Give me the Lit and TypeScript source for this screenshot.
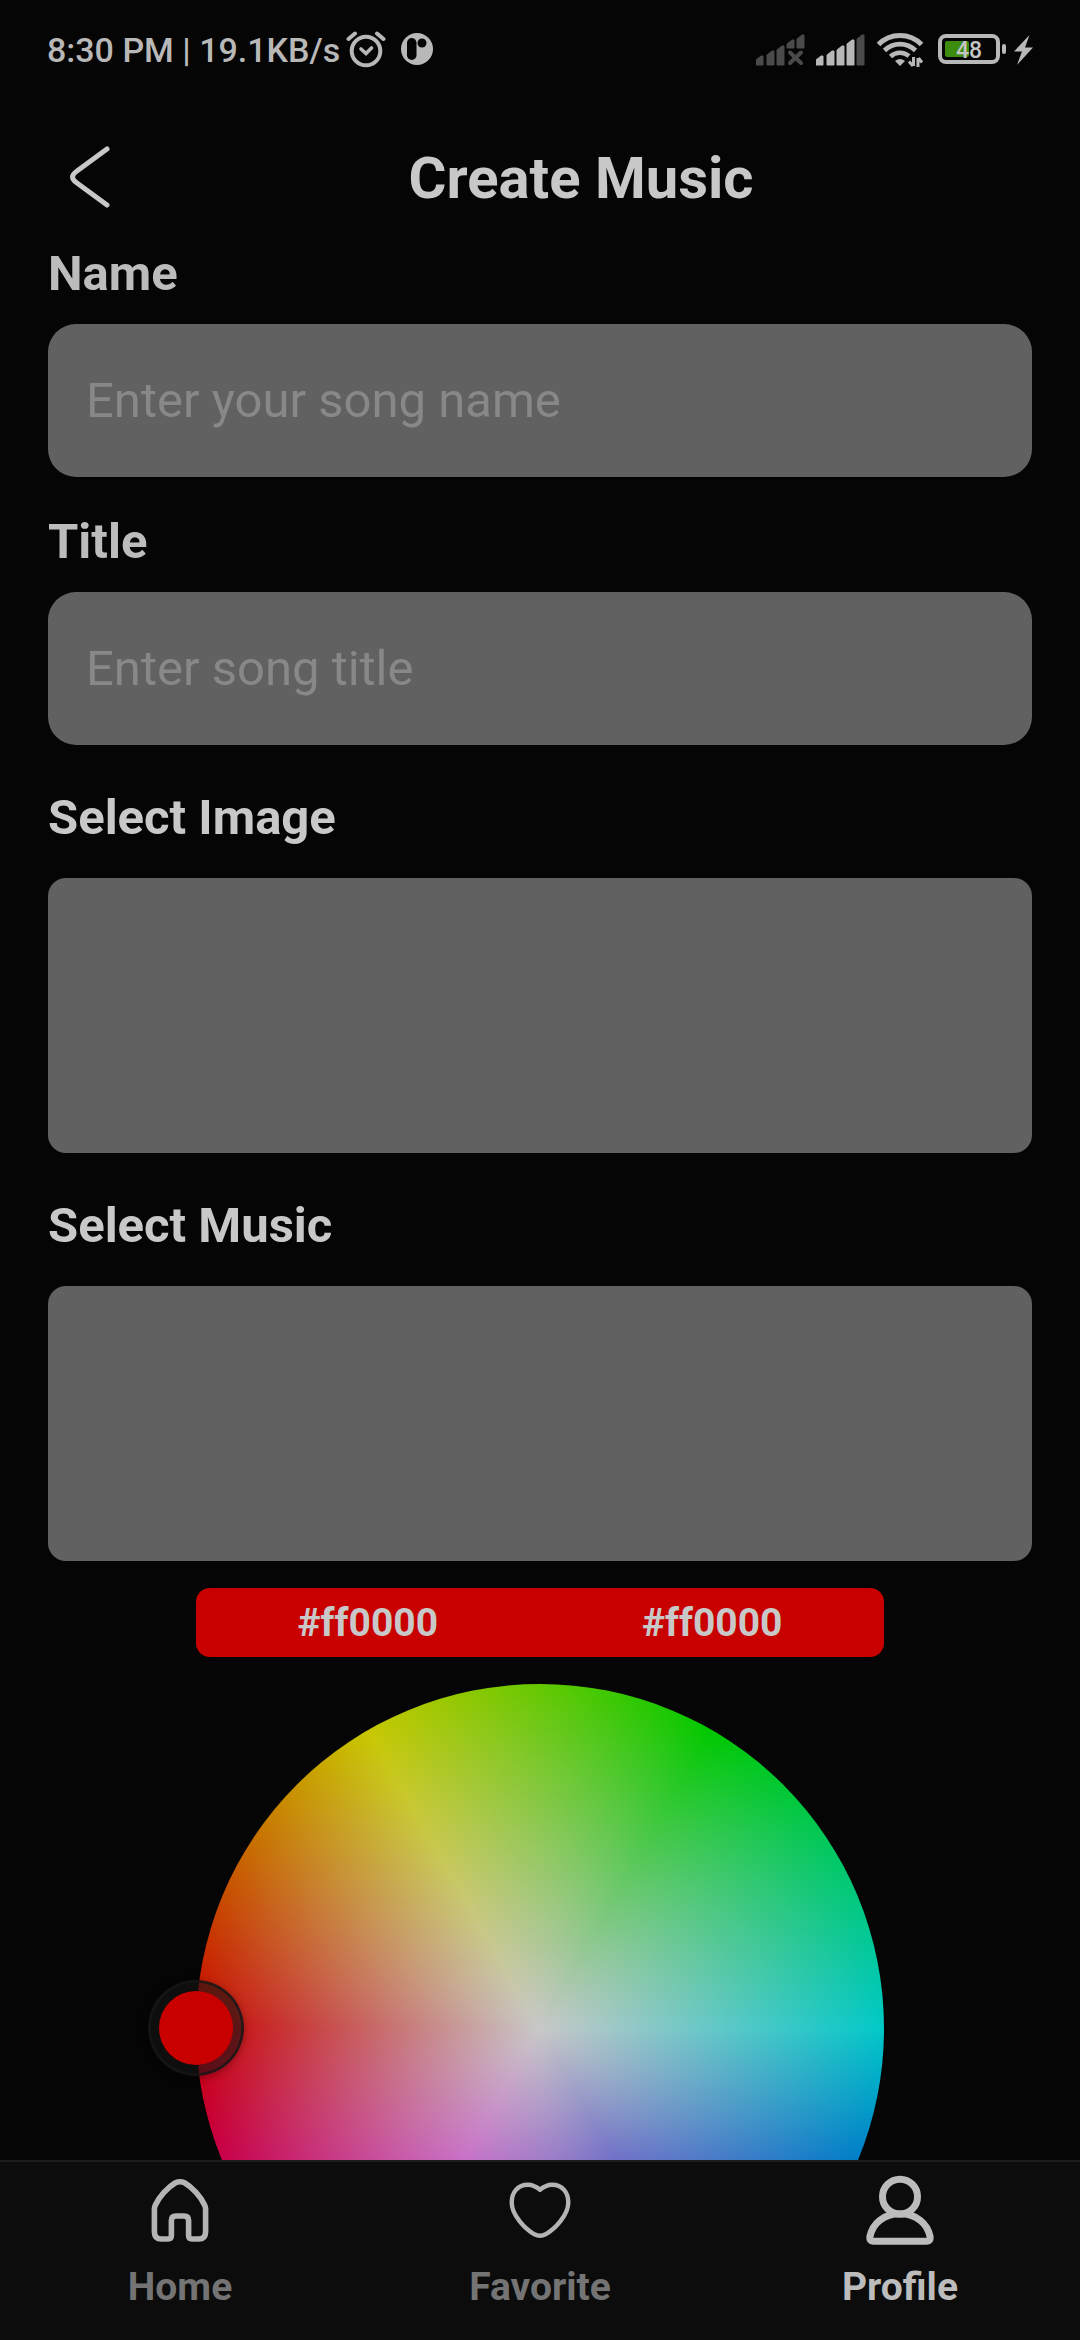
import { LitElement, html, css, svg } from "lit";
import { customElement, property, state } from "lit/decorators.js";
import { classMap } from "lit/directives/class-map.js";

const cellBars = (lit: number, cut: boolean) => {
  const bars = [
    { x: 0, y: 22 },
    { x: 11, y: 17 },
    { x: 21, y: 12 },
    { x: 31, y: 6 },
    { x: 41, y: 1 },
  ];
  return bars.map((b, i) => {
    const end = cut && i > 2 ? 14 : 31;
    return svg`<path class=${i < lit ? "on" : "off"}
      d="M${b.x} ${b.y + 4} L${b.x + 5} ${b.y} H${b.x + 7} V${end} H${b.x} Z" />`;
  });
};

@customElement("status-bar")
export class StatusBar extends LitElement {
  @property({ type: Number }) battery = 48;

  static styles = css`
    :host {
      display: flex;
      justify-content: space-between;
      align-items: center;
      height: 100px;
      padding: 0 47px;
      color: #b8b8b8;
      font: 500 34px/40px Roboto, sans-serif;
    }
    .group {
      display: flex;
      align-items: center;
      gap: 8px;
    }
    .left {
      gap: 6px;
    }
    .tray {
      margin-left: 8px;
    }
    svg {
      display: block;
    }
    .on {
      fill: #b8b8b8;
      stroke: #b8b8b8;
      stroke-width: 1;
      stroke-linejoin: round;
    }
    .off {
      fill: #4a4a4a;
      stroke: #4a4a4a;
      stroke-width: 1;
      stroke-linejoin: round;
    }
    .cross {
      stroke: #4a4a4a;
      stroke-width: 4;
      stroke-linecap: round;
    }
    .level {
      font: 500 23px/23px Roboto, sans-serif;
      fill: #c4c4c4;
    }
  `;

  render() {
    return html`
      <div class="group left">
        <span>8:30 PM | 19.1KB/s</span>
        <svg width="40" height="38" viewBox="0 0 40 38" fill="none" stroke="#b8b8b8" stroke-linecap="round" aria-hidden="true">
          <circle cx="20" cy="20" r="14.3" stroke-width="4" />
          <path d="M2.5 8 L9 2.5 M37.5 8 L31 2.5" stroke-width="4" />
          <path d="M15 18 L20 22.5 L25.5 17" stroke-width="3.6" />
        </svg>
        <svg class="tray" width="34" height="34" viewBox="0 0 34 34" aria-hidden="true">
          <circle cx="17" cy="16" r="16" fill="#b8b8b8" />
          <rect x="7" y="5" width="9.5" height="22" rx="4.7" fill="#050505" />
          <circle cx="22" cy="10" r="4.5" fill="#050505" />
        </svg>
      </div>
      <div class="group">
        <svg width="52" height="32" viewBox="0 0 52 32" aria-hidden="true">
          ${cellBars(0, true)}
          <path class="cross" d="M34 18.500 L45 29 M45 18.500 L34 29" />
        </svg>
        <svg width="52" height="32" viewBox="0 0 52 32" aria-hidden="true">${cellBars(4, false)}</svg>
        <svg width="54" height="36" viewBox="-1 0 54 36" fill="none" stroke="#b8b8b8" aria-hidden="true">
          <path d="M1.5 12.5 A30 30 0 0 1 44.5 12.5" stroke-width="5" />
          <path d="M7.5 18.5 A22 22 0 0 1 38.5 18.5" stroke-width="4.6" />
          <path d="M13.5 24.5 A14 14 0 0 1 32 24" stroke-width="4.6" />
          <path d="M18 29 Q23 25 28 29 L23 34 Z" fill="#b8b8b8" stroke="none" />
          <path d="M36.5 25 V34 M32 29.5 L36 34 M41 35 V26 M45 30.5 L41.5 26" stroke-width="3" />
        </svg>
        <svg width="68" height="32" viewBox="0 0 68 32" aria-hidden="true">
          <rect x="2" y="2" width="58" height="26" rx="6" fill="none" stroke="#b8b8b8" stroke-width="4" />
          <rect x="7" y="7" width=${Math.round(this.battery / 2)} height="16" rx="2" fill="#3c8c10" />
          <rect x="64" y="10" width="4" height="10" rx="2" fill="#b8b8b8" />
          <text class="level" x="31" y="24" text-anchor="middle">${this.battery}</text>
        </svg>
        <svg width="19" height="30" viewBox="0 0 19 30" fill="#b8b8b8" aria-hidden="true">
          <path d="M15.500 0 L0 16.500 H8 L3 30 L19 12.500 H11 Z" />
        </svg>
      </div>
    `;
  }
}

@customElement("color-wheel")
export class ColorWheel extends LitElement {
  @property() color = "#ff0000";

  static styles = css`
    :host {
      display: flex;
      flex-direction: column;
      align-items: center;
      gap: 27px;
      font: 700 39px/46px Roboto, sans-serif;
      color: #c8c8c8;
    }
    .swatches {
      display: grid;
      grid-template-columns: 1fr 1fr;
      width: 70%;
      height: 69px;
      border-radius: 14px;
      background: #c80000;
      align-items: center;
      text-align: center;
    }
    .wheel {
      position: relative;
      width: 70%;
      aspect-ratio: 1;
      border-radius: 50%;
      background:
        radial-gradient(closest-side, #c8c8c8, rgba(200, 200, 200, 0)),
        conic-gradient(from 270deg, #c80000, #c8c800, #00c800, #00c8c8, #0000c8, #c800c8, #c80000);
    }
    .thumb {
      position: absolute;
      left: -48px;
      top: calc(50% - 48px);
      box-sizing: border-box;
      width: 96px;
      height: 96px;
      padding: 8px;
      border: 3px solid rgba(22, 22, 22, 0.9);
      border-radius: 50%;
      background: rgba(20, 20, 20, 0.6);
      background-clip: padding-box;
      box-shadow: 0 2px 8px rgba(0, 0, 0, 0.3);
    }
    .dot {
      display: block;
      height: 100%;
      border-radius: 50%;
      background: #c80000;
    }
  `;

  render() {
    return html`
      <div class="swatches">
        <span>${this.color}</span>
        <span>${this.color}</span>
      </div>
      <div class="wheel">
        <button class="thumb" aria-label="Picked colour ${this.color}"><span class="dot"></span></button>
      </div>
    `;
  }
}

@customElement("tab-bar")
export class TabBar extends LitElement {
  @state() private active = "Profile";

  static styles = css`
    :host {
      display: block;
      background: #0c0c0c;
      border-top: 2px solid #1c1c1c;
    }
    .tabs {
      display: grid;
      grid-template-columns: repeat(3, 1fr);
    }
    .tab {
      display: flex;
      flex-direction: column;
      align-items: center;
      gap: 14px;
      padding: 12px 0 30px;
      color: #747474;
      font: 700 39px/46px Roboto, sans-serif;
      text-decoration: none;
    }
    .tab.active {
      color: #bcbcbc;
    }
    svg {
      display: block;
      fill: none;
      stroke: #b4b4b4;
      stroke-linejoin: round;
    }
    .active svg {
      stroke: #bcbcbc;
    }
  `;

  private icons = {
    Home: svg`<path stroke-width="5.600" d="M8.400 35 Q8.400 33 9.400 31 C13 23 22 13 29.500 8.800 Q34 6.600 38.500 8.800 C46 13 55 23 58.600 31 Q59.600 33 59.600 35 V58 Q59.600 65 52.600 65 H46 Q42.600 65 42.600 61.600 V46.500 Q42.600 42 38 42 H30 Q25.400 42 25.400 46.500 V61.600 Q25.400 65 22 65 H15.400 Q8.400 65 8.400 58 Z" />`,
    Favorite: svg`<path stroke-width="4.400" d="M34 15.700 C29.500 12 26 10.700 22 10.700 C11.500 10.700 5.700 18.500 5.700 28.500 C5.700 41 19 55 28.500 60.300 Q34 63.200 39.500 60.300 C49 55 62.300 41 62.300 28.500 C62.300 18.500 56.500 10.700 46 10.700 C42 10.700 38.500 12 34 15.700 Z" />`,
    Profile: svg`<circle cx="34" cy="22.700" r="17.500" stroke-width="7" /><path stroke-width="7" d="M3.800 63 C6.500 49 18 39.800 34 39.800 C50 39.800 61.500 49 64.200 63 Q64.500 67.200 61 67.200 H7 Q3.500 67.200 3.800 63 Z" />`,
  };

  render() {
    return html`
      <nav class="tabs">
        ${Object.entries(this.icons).map(
          ([name, icon]) => html`
            <a class=${classMap({ tab: true, active: name === this.active })} href="#${name.toLowerCase()}"
              @click=${() => (this.active = name)}>
              <svg width="68" height="76" viewBox="0 0 68 76" aria-hidden="true">${icon}</svg>
              <span>${name}</span>
            </a>
          `
        )}
      </nav>
    `;
  }
}

@customElement("app-root")
export class AppRoot extends LitElement {
  static styles = css`
    :host {
      display: flex;
      flex-direction: column;
      height: 100vh;
      overflow: hidden;
      background: #050505;
      color: #c8c8c8;
      font-family: Roboto, sans-serif;
    }
    .header {
      display: grid;
      grid-template-columns: 82px 1fr;
      align-items: center;
      padding: 44px 48px 33px;
    }
    .back {
      padding: 0 0 0 20px;
      border: 0;
      background: none;
      justify-self: start;
    }
    .back svg {
      display: block;
    }
    .heading {
      margin: 0;
      text-align: center;
      font: 700 58px/68px Roboto, sans-serif;
    }
    .form {
      flex: 1;
      min-height: 0;
      overflow: hidden;
      padding: 0 48px;
    }
    .field {
      display: flex;
      flex-direction: column;
      gap: 21px;
      margin-bottom: 36px;
    }
    .label {
      font: 700 49px/58px Roboto, sans-serif;
      color: #bcbcbc;
    }
    .input {
      box-sizing: border-box;
      width: 100%;
      height: 153px;
      padding: 0 38px;
      border: 0;
      border-radius: 28px;
      background: #616161;
      color: #c8c8c8;
      font: 400 49px/58px Roboto, sans-serif;
    }
    .input::placeholder {
      color: #888888;
      opacity: 1;
    }
    .picker {
      display: flex;
      flex-direction: column;
      gap: 31px;
      margin-top: 44px;
    }
    .picker .label {
      color: #c8c8c8;
    }
    .drop {
      width: 100%;
      height: 275px;
      padding: 0;
      border: 0;
      border-radius: 18px;
      background: #616161;
    }
    .colors {
      margin-top: 27px;
    }
  `;

  render() {
    return html`
      <status-bar battery="48"></status-bar>
      <header class="header">
        <button class="back" aria-label="Back">
          <svg width="44" height="64" viewBox="0 0 44 64" fill="none" stroke="#c8c8c8" stroke-width="5" stroke-linecap="round" aria-hidden="true">
            <path d="M39 3 L9 25 Q0 31 9 37 L39 59" />
          </svg>
        </button>
        <h1 class="heading">Create Music</h1>
      </header>
      <main class="form">
        <div class="field">
          <label class="label" for="name">Name</label>
          <input class="input" id="name" type="text" placeholder="Enter your song name" />
        </div>
        <div class="field">
          <label class="label" for="title">Title</label>
          <input class="input" id="title" type="text" placeholder="Enter song title" />
        </div>
        <div class="picker">
          <span class="label" id="image-label">Select Image</span>
          <button class="drop" aria-labelledby="image-label"></button>
        </div>
        <div class="picker">
          <span class="label" id="music-label">Select Music</span>
          <button class="drop" aria-labelledby="music-label"></button>
        </div>
        <color-wheel class="colors" color="#ff0000"></color-wheel>
      </main>
      <tab-bar></tab-bar>
    `;
  }
}
